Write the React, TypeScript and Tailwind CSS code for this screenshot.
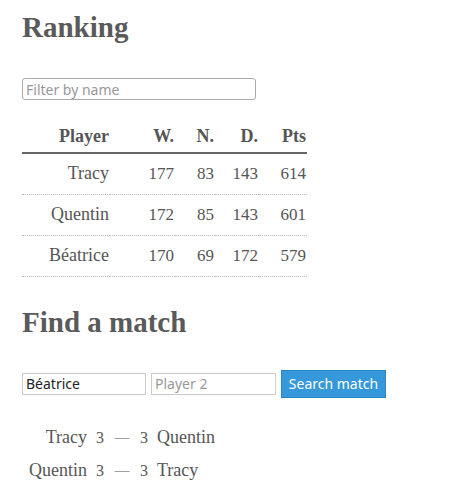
import React from "react";

const serif = { fontFamily: '"Liberation Serif", "DejaVu Serif", serif' };
const sans = { fontFamily: '"Noto Sans", "Open Sans", sans-serif' };

const rows = [
  ["Tracy", "177", "83", "143", "614"],
  ["Quentin", "172", "85", "143", "601"],
  ["Béatrice", "170", "69", "172", "579"],
];

const matches = [
  ["Tracy", "3", "3", "Quentin"],
  ["Quentin", "3", "3", "Tracy"],
];

export default function App() {
  return (
    <div className="w-[456px] h-[501px] bg-white text-[#555] pl-[22px]" style={serif}>
      <h1 className="text-[29px] font-bold text-[#5a5a5a] pt-[9px] leading-[36px]">Ranking</h1>
      <input
        className="mt-[33px] block w-[234px] h-[22px] border border-[#aaa] rounded-[3px] px-[3px] text-[14px] outline-none placeholder:text-[#999]"
        style={sans}
        placeholder="Filter by name"
      />
      <table className="mt-[22px] table-fixed w-[285px] border-collapse text-[18px]">
        <colgroup>
          <col className="w-[88px]" />
          <col className="w-[65px]" />
          <col className="w-[40px]" />
          <col className="w-[44px]" />
          <col className="w-[48px]" />
        </colgroup>
        <thead>
          <tr className="border-b-[2px] border-[#666] h-[31px]">
            {["Player", "W.", "N.", "D.", "Pts"].map((h) => (
              <th key={h} className="text-right font-bold text-[#555] align-middle pb-[2px] pr-[1px]">
                {h}
              </th>
            ))}
          </tr>
        </thead>
        <tbody>
          {rows.map((r) => (
            <tr key={r[0]} className="h-[41px] border-b border-dotted border-[#bbb]">
              {r.map((c, i) => (
                <td key={i} className="text-right pr-[1px] align-middle">
                  {i === 0 ? c : <span className="text-[17px]">{c}</span>}
                </td>
              ))}
            </tr>
          ))}
        </tbody>
      </table>
      <h2 className="text-[29px] font-bold text-[#5a5a5a] mt-[27px] leading-[36px]">Find a match</h2>
      <div className="flex items-center gap-[5px] mt-[30px]" style={sans}>
        <input
          className="w-[124px] h-[22px] border border-[#ccc] px-[3px] text-[14px] text-[#222] outline-none"
          defaultValue="Béatrice"
        />
        <input
          className="w-[125px] h-[22px] border border-[#ccc] px-[3px] text-[14px] outline-none placeholder:text-[#999]"
          placeholder="Player 2"
        />
        <button className="w-[105px] h-[28px] bg-[#3498db] border border-[#2c86c4] text-white text-[14px]">
          Search match
        </button>
      </div>
      <div className="mt-[28px] text-[18px] flex flex-col gap-[9px]">
        {matches.map((m, i) => (
          <div key={i} className="flex items-center h-[24px]">
            <span className="w-[65px] text-right">{m[0]}</span>
            <span className="w-[26px] text-center text-[16px]">{m[1]}</span>
            <span className="w-[18px] text-center text-[15px]">—</span>
            <span className="w-[26px] text-center text-[16px]">{m[2]}</span>
            <span>{m[3]}</span>
          </div>
        ))}
      </div>
    </div>
  );
}
